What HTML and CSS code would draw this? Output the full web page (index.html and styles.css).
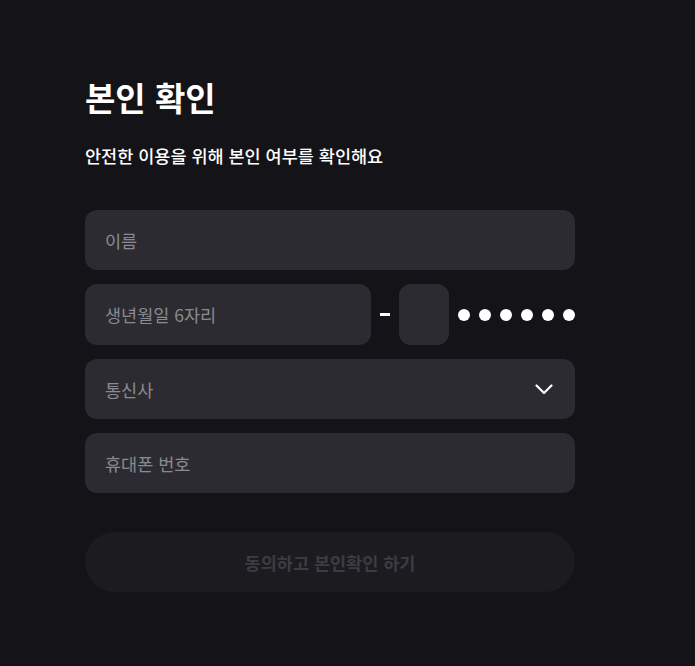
FILE: index.html
```html
<!DOCTYPE html>
<html lang="ko">
<head>
<meta charset="utf-8">
<link rel="stylesheet" href="styles.css">
</head>
<body>
<main class="page">
  <h1 class="title">본인 확인</h1>
  <p class="subtitle">안전한 이용을 위해 본인 여부를 확인해요</p>
  <form class="form">
    <div class="field"><span class="placeholder">이름</span></div>
    <div class="id-row">
      <div class="field birth"><span class="placeholder">생년월일 6자리</span></div>
      <span class="dash"></span>
      <div class="field digit"></div>
      <div class="dots">
        <span class="dot"></span><span class="dot"></span><span class="dot"></span>
        <span class="dot"></span><span class="dot"></span><span class="dot"></span>
      </div>
    </div>
    <div class="field select">
      <span class="placeholder">통신사</span>
      <svg class="chevron" width="18" height="12" viewBox="0 0 18 12"><path d="M1.5 2.5 L9 10 L16.5 2.5" fill="none" stroke="#ffffff" stroke-width="2.2" stroke-linecap="round" stroke-linejoin="round"/></svg>
    </div>
    <div class="field"><span class="placeholder">휴대폰 번호</span></div>
    <button type="button" class="submit">동의하고 본인확인 하기</button>
  </form>
</main>
</body>
</html>
```

FILE: styles.css
```css
* { box-sizing: border-box; }
html, body {
  margin: 0;
  padding: 0;
  background: #141318;
}
body {
  font-family: "Noto Sans CJK KR", "Noto Sans", sans-serif;
  color: #ffffff;
  width: 695px;
  height: 666px;
  overflow: hidden;
}
.page {
  padding: 73px 120px 0 85px;
}
.title {
  margin: 0;
  font-size: 33px;
  font-weight: 700;
  line-height: 48px;
}
.subtitle {
  margin: 23px 0 0;
  font-size: 17.5px;
  font-weight: 500;
  line-height: 24px;
}
.form {
  margin-top: 42px;
  display: flex;
  flex-direction: column;
  gap: 14px;
  width: 490px;
}
.field {
  height: 60px;
  background: #2c2b31;
  border-radius: 12px;
  display: flex;
  align-items: center;
  padding: 0 20px;
}
.placeholder {
  color: #8b8a90;
  font-size: 17.5px;
}
.id-row {
  display: flex;
  align-items: center;
  height: 61px;
}
.id-row .field { height: 61px; }
.birth { width: 286px; }
.dash {
  width: 10px;
  height: 3px;
  background: #ffffff;
  margin: 0 9px;
}
.digit { width: 50px; padding: 0; }
.dots {
  display: flex;
  gap: 9px;
  margin-left: 9px;
}
.dot {
  width: 12px;
  height: 12px;
  border-radius: 50%;
  background: #ffffff;
}
.select { justify-content: space-between; padding-right: 22px; }
.chevron { display: block; }
.submit {
  margin-top: 25px;
  height: 60px;
  border: none;
  border-radius: 30px;
  background: #1c1b20;
  color: #3d3c42;
  font-family: inherit;
  font-size: 17.5px;
  font-weight: 700;
}
```
